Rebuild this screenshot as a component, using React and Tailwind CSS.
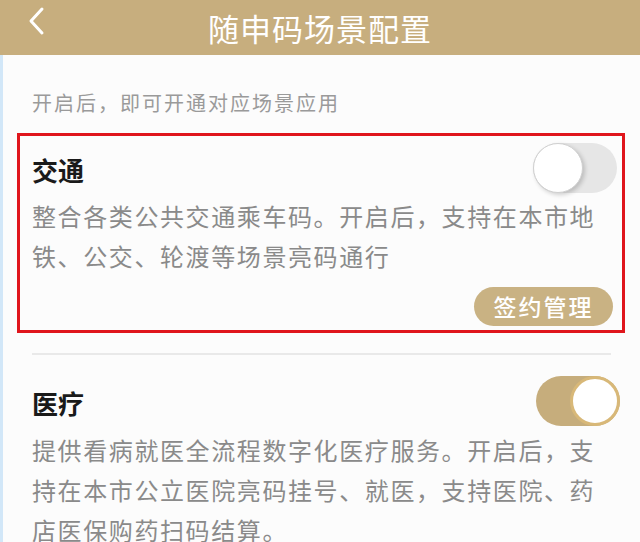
import React from "react";

function Toggle({ on }) {
  if (on) {
    return (
      <div className="w-[84px] h-[50px] rounded-full bg-[#c6ad7c] flex items-center justify-end shrink-0">
        <div className="w-[50px] h-[50px] rounded-full bg-white border-[3px] border-[#d8b878]" />
      </div>
    );
  }
  return (
    <div className="w-[84px] h-[50px] rounded-full bg-[#e6e6e6] flex items-center shrink-0">
      <div className="w-[50px] h-[50px] rounded-full bg-white border border-[#d0d0d0] shadow-[2px_2px_4px_rgba(0,0,0,0.18)]" />
    </div>
  );
}

export default function App() {
  return (
    <div className="w-[640px] h-[542px] overflow-hidden bg-[#fcfcfc] font-['Noto_Sans_CJK_SC',sans-serif]">
      {/* header */}
      <div className="relative h-[55px] bg-[#c7ae7e] flex items-center justify-center">
        <svg className="absolute left-[26px] top-[6px]" width="22" height="30" viewBox="0 0 22 30">
          <path d="M16 3 L5 15 L16 27" fill="none" stroke="white" strokeWidth="3" strokeLinecap="round" strokeLinejoin="round" />
        </svg>
        <h1 className="text-[31px] leading-none text-white tracking-[1px]">随申码场景配置</h1>
      </div>

      <div className="flex h-[487px]">
        <div className="w-[3px] bg-[#d2e7f8]" />
        <div className="flex-1 pl-[14px]">
          <p className="pt-[34px] pl-[15px] text-[20px] leading-[28px] text-[#9a9a9a] tracking-[2px]">
            开启后，即可开通对应场景应用
          </p>

          {/* 交通 */}
          <div className="mt-[16px] w-[608px] border-[3px] border-[#e0161c] pl-[12px] pr-[5px] pt-[7px] pb-[4px]">
            <div className="flex items-center justify-between">
              <h2 className="text-[26px] leading-none font-bold text-[#1a1a1a] mt-[4px]">交通</h2>
              <Toggle on={false} />
            </div>
            <p className="mt-[3px] w-[568px] text-[24px] leading-[40px] tracking-[1.6px] text-[#8a8a8a]">
              整合各类公共交通乘车码。开启后，支持在本市地铁、公交、轮渡等场景亮码通行
            </p>
            <div className="mt-[11px] flex justify-end pr-[4px]">
              <button className="w-[139px] h-[39px] rounded-full bg-[#c9b283] text-white text-[23px] leading-none font-medium tracking-[2px]">
                签约管理
              </button>
            </div>
          </div>

          <div className="mt-[20px] ml-[15px] w-[579px] h-[2px] bg-[#e9e9e9]" />

          {/* 医疗 */}
          <div className="pt-[21px] pl-[15px] w-[603px]">
            <div className="flex items-center justify-between">
              <h2 className="text-[26px] leading-none font-bold text-[#1a1a1a] mt-[4px]">医疗</h2>
              <Toggle on={true} />
            </div>
            <p className="mt-[4px] w-[568px] text-[24px] leading-[40px] tracking-[1.6px] text-[#8a8a8a]">
              提供看病就医全流程数字化医疗服务。开启后，支持在本市公立医院亮码挂号、就医，支持医院、药店医保购药扫码结算。
            </p>
          </div>
        </div>
      </div>
    </div>
  );
}
